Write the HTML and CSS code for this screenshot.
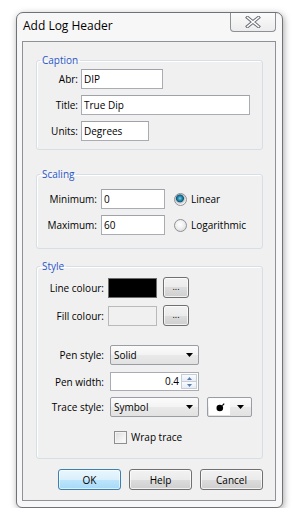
FILE: index.html
```html
<!DOCTYPE html>
<html>
<head>
<meta charset="utf-8">
<title>Add Log Header</title>
<link rel="stylesheet" href="styles.css">
</head>
<body>
<div class="window">
  <div class="titlebar">
    <span class="title">Add Log Header</span>
    <div class="close">
      <svg width="16" height="12" viewBox="0 0 16 12"><path d="M2.5 1.5 L13.5 10.5 M13.5 1.5 L2.5 10.5" stroke="#6a6e76" stroke-width="3.4" stroke-linecap="square" fill="none"/><path d="M2.5 1.5 L13.5 10.5 M13.5 1.5 L2.5 10.5" stroke="#ffffff" stroke-width="1.5" stroke-linecap="square" fill="none"/></svg>
    </div>
  </div>
  <div class="client">
    <fieldset class="group g-caption">
      <legend>Caption</legend>
      <div class="row"><span class="lbl">Abr:</span><div class="edit w-abr">DIP</div></div>
      <div class="row mt6"><span class="lbl">Title:</span><div class="edit w-title">True Dip</div></div>
      <div class="row mt6"><span class="lbl">Units:</span><div class="edit w-units">Degrees</div></div>
    </fieldset>

    <fieldset class="group g-scaling">
      <legend>Scaling</legend>
      <div class="row"><span class="lbl">Minimum:</span><div class="edit w-num">0</div><span class="radio checked"></span><span class="rlabel">Linear</span></div>
      <div class="row mt6"><span class="lbl">Maximum:</span><div class="edit w-num">60</div><span class="radio"></span><span class="rlabel">Logarithmic</span></div>
    </fieldset>

    <fieldset class="group g-style">
      <legend>Style</legend>
      <div class="row"><span class="lbl">Line colour:</span><div class="swatch black"></div><div class="btn dots">...</div></div>
      <div class="row mt7"><span class="lbl">Fill colour:</span><div class="swatch empty"></div><div class="btn dots">...</div></div>
      <div class="row mt19"><span class="lbl">Pen style:</span>
        <div class="combo w-combo"><span class="combo-text">Solid</span><svg class="arrow" width="7" height="4" viewBox="0 0 7 4"><path d="M0 0 H7 L3.5 4 Z" fill="#000"/></svg></div>
      </div>
      <div class="row mt7"><span class="lbl">Pen width:</span>
        <div class="spin w-combo">
          <span class="spin-val">0.4</span>
          <div class="spin-btns">
            <div class="spin-btn"><svg width="5" height="3" viewBox="0 0 5 3"><path d="M0 3 H5 L2.5 0 Z" fill="#5a7db0"/></svg></div>
            <div class="spin-btn"><svg width="5" height="3" viewBox="0 0 5 3"><path d="M0 0 H5 L2.5 3 Z" fill="#5a7db0"/></svg></div>
          </div>
        </div>
      </div>
      <div class="row mt6"><span class="lbl">Trace style:</span>
        <div class="combo w-combo"><span class="combo-text">Symbol</span><svg class="arrow" width="7" height="4" viewBox="0 0 7 4"><path d="M0 0 H7 L3.5 4 Z" fill="#000"/></svg></div>
        <div class="symcombo">
          <div class="sym-face"><svg width="9" height="9" viewBox="0 0 9 9"><circle cx="3.8" cy="5" r="3.3" fill="#000"/><path d="M6.3 2.6 L8.2 0.6" stroke="#000" stroke-width="1.2"/></svg></div>
          <div class="sym-drop"><svg width="7" height="4" viewBox="0 0 7 4"><path d="M0 0 H7 L3.5 4 Z" fill="#000"/></svg></div>
        </div>
      </div>
      <div class="row check-row"><span class="checkbox"></span><span class="clabel">Wrap trace</span></div>
    </fieldset>

    <div class="buttons">
      <div class="btn push default">OK</div>
      <div class="btn push">Help</div>
      <div class="btn push">Cancel</div>
    </div>
  </div>
</div>
</body>
</html>
```
FILE: styles.css
```css
* { box-sizing: border-box; }
html, body { margin: 0; }
body {
  background: #ffffff;
  padding: 12px 0 0 16px;
  font-family: "Open Sans", "Noto Sans", sans-serif;
  font-size: 10px;
  color: #000;
}
.window {
  width: 267px;
  height: 496px;
  border: 1px solid #6f7277;
  border-radius: 7px 7px 6px 6px;
  background: #f7f7f7;
  box-shadow: 1px 2px 7px rgba(0,0,0,0.35);
  display: flex;
  flex-direction: column;
  padding: 0 6px 6px 5px;
}
.titlebar {
  height: 28px;
  flex: none;
  display: flex;
  justify-content: space-between;
  align-items: flex-start;
}
.title {
  font-size: 12px;
  line-height: 16px;
  padding: 5px 0 0 1px;
  color: #000;
}
.close {
  width: 46px;
  height: 19px;
  border: 1px solid #8d9096;
  border-top: none;
  border-radius: 0 0 4px 4px;
  background: linear-gradient(#fbfbfb, #ececec);
  display: flex;
  align-items: center;
  justify-content: center;
  padding-bottom: 1px;
}
.client {
  flex: 1;
  border: 1px solid #8e9196;
  background: #f0f0f0;
  display: flex;
  flex-direction: column;
  padding: 0 12px 0 13px;
}
.group {
  margin: 0;
  padding: 0;
  min-width: 0;
  border: 1px solid #d5dfe5;
  border-radius: 3px;
  box-shadow: inset 1px 1px 0 #ffffff;
}
.group legend {
  padding: 0 2px;
  margin-left: 3px;
  font-size: 10px;
  line-height: 14px;
  color: #2a55c9;
}
.g-caption { margin-top: 11px; padding: 2px 0 8px 0; }
.g-scaling { margin-top: 17px; padding: 8px 0 13px 0; }
.g-style { margin-top: 10px; padding: 4px 0 14px 0; }

.row { display: flex; align-items: center; }
.mt6 { margin-top: 6px; }
.mt7 { margin-top: 7px; }
.mt19 { margin-top: 19px; }
.lbl { flex: none; text-align: right; line-height: 14px; }
.g-caption .lbl { width: 41px; margin-right: 3px; }
.g-scaling .lbl { width: 60px; margin-right: 4px; }
.g-style .lbl { width: 67px; margin-right: 4px; }

.edit {
  height: 20px;
  border: 1px solid #a9acb2;
  border-top-color: #9fa2a8;
  background: #ffffff;
  padding: 0 2px;
  line-height: 18px;
  white-space: nowrap;
}
.w-abr { width: 82px; }
.w-title { width: 169px; }
.w-units { width: 68px; }
.w-num { width: 64px; }

.radio {
  width: 13px;
  height: 13px;
  border-radius: 50%;
  border: 1px solid #8e9196;
  background: radial-gradient(circle at 45% 40%, #ffffff 0, #f0f0f0 45%, #cfcfcf 100%);
  margin-left: 9px;
  flex: none;
}
.radio.checked {
  background: radial-gradient(circle at 45% 40%, #7fd0ea 0, #2a8db0 22%, #0c5a78 40%, #c4c4c4 48%, #f6f6f6 70%, #d6d6d6 100%);
}
.rlabel { margin-left: 4px; line-height: 14px; }

.swatch { width: 49px; height: 20px; flex: none; }
.swatch.black { background: #000; border: 1px solid #6d6d6d; }
.swatch.empty { background: #f0f0f0; border: 1px solid #b9b9b9; }

.btn {
  border: 1px solid #707070;
  border-radius: 3px;
  background: linear-gradient(#f2f2f2 0, #ebebeb 50%, #dddddd 50%, #cfcfcf 100%);
  box-shadow: inset 0 0 0 1px rgba(255,255,255,0.7);
  display: flex;
  align-items: center;
  justify-content: center;
  flex: none;
}
.dots {
  width: 26px;
  height: 21px;
  margin-left: 6px;
  line-height: 10px;
  padding-bottom: 2px;
  font-size: 9px;
}

.combo {
  height: 20px;
  border: 1px solid #9a9da3;
  border-radius: 2px;
  background: linear-gradient(#fbfbfb 0, #f3f3f3 50%, #e9e9e9 50%, #e2e2e2 100%);
  display: flex;
  align-items: center;
  padding: 0 5px 0 3px;
  flex: none;
}
.w-combo { width: 89px; margin-left: 2px; }
.combo-text { flex: 1; line-height: 14px; }
.arrow { flex: none; }

.spin {
  height: 19px;
  border: 1px solid #a9acb2;
  background: #fff;
  display: flex;
  align-items: stretch;
  flex: none;
}
.spin-val { flex: 1; text-align: right; line-height: 17px; padding-right: 2px; }
.spin-btns { width: 17px; display: flex; flex-direction: column; padding: 1px 1px 1px 0; }
.spin-btn {
  flex: 1;
  border: 1px solid #c5cdd8;
  background: linear-gradient(#fafbfd, #e8edf3);
  display: flex;
  align-items: center;
  justify-content: center;
}
.spin-btn + .spin-btn { border-top: none; }

.symcombo {
  width: 45px;
  height: 20px;
  margin-left: 8px;
  border: 1px solid #9a9da3;
  border-radius: 2px;
  display: flex;
  flex: none;
  background: linear-gradient(#fbfbfb 0, #f3f3f3 50%, #e9e9e9 50%, #e2e2e2 100%);
  padding: 1px;
}
.sym-face {
  width: 21px;
  background: #ffffff;
  display: flex;
  align-items: center;
  justify-content: center;
  padding-left: 2px;
}
.sym-drop {
  flex: 1;
  display: flex;
  align-items: center;
  justify-content: center;
}

.check-row { margin-top: 13px; padding-left: 77px; }
.checkbox {
  width: 13px;
  height: 13px;
  border: 1px solid #8f8f8f;
  background: linear-gradient(135deg, #dcdcdc, #ffffff);
  box-shadow: inset 0 0 0 1px #f4f4f4;
  flex: none;
}
.clabel { margin-left: 4px; line-height: 14px; }

.buttons {
  margin-top: 10px;
  display: flex;
  justify-content: flex-end;
  gap: 8px;
}
.push { width: 63px; height: 21px; line-height: 14px; }
.default {
  border-color: #3c7fb1;
  background: linear-gradient(#eaf6fd 0, #d9f0fc 50%, #bee6fd 50%, #a7d9f5 100%);
  box-shadow: inset 0 0 0 1px rgba(255,255,255,0.6);
}
```
